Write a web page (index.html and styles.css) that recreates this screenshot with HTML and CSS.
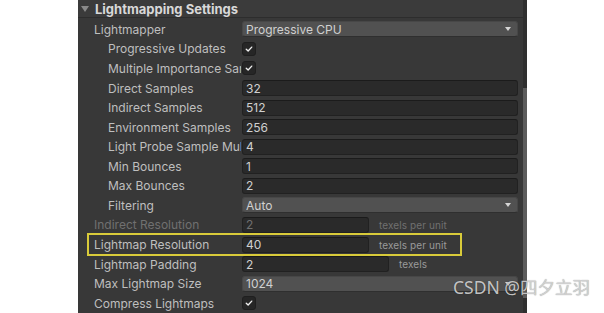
FILE: index.html
```html
<!DOCTYPE html>
<html lang="en">
<head>
    <meta charset="UTF-8">
    <meta name="viewport" content="width=device-width, initial-scale=1.0">
    <title>Lightmapping Settings</title>
    <link rel="stylesheet" href="styles.css">
</head>
<body>
    <div class="panel">
        <div class="content">
            <div class="header">
                <i class="foldout"></i>
                <span>Lightmapping Settings</span>
            </div>
            <div class="rows">
                <div class="row">
                    <span class="label">Lightmapper</span>
                    <div class="popup">Progressive CPU<i class="arrow"></i></div>
                </div>
                <div class="row sub">
                    <span class="label">Progressive Updates</span>
                    <div class="toggle"><svg viewBox="0 0 14 14"><path d="M3.8 7.2 L6 9.3 L10.2 4.8" /></svg></div>
                </div>
                <div class="row sub">
                    <span class="label">Multiple Importance Sampling</span>
                    <div class="toggle"><svg viewBox="0 0 14 14"><path d="M3.8 7.2 L6 9.3 L10.2 4.8" /></svg></div>
                </div>
                <div class="row sub">
                    <span class="label">Direct Samples</span>
                    <div class="input">32</div>
                </div>
                <div class="row sub">
                    <span class="label">Indirect Samples</span>
                    <div class="input">512</div>
                </div>
                <div class="row sub">
                    <span class="label">Environment Samples</span>
                    <div class="input">256</div>
                </div>
                <div class="row sub">
                    <span class="label">Light Probe Sample Multiplier</span>
                    <div class="input">4</div>
                </div>
                <div class="row sub">
                    <span class="label">Min Bounces</span>
                    <div class="input">1</div>
                </div>
                <div class="row sub">
                    <span class="label">Max Bounces</span>
                    <div class="input">2</div>
                </div>
                <div class="row sub">
                    <span class="label">Filtering</span>
                    <div class="popup">Auto<i class="arrow"></i></div>
                </div>
                <div class="row disabled">
                    <span class="label">Indirect Resolution</span>
                    <div class="with-suffix">
                        <div class="input short">2</div>
                        <span class="suffix">texels per unit</span>
                    </div>
                </div>
                <div class="row marked">
                    <span class="label">Lightmap Resolution</span>
                    <div class="with-suffix">
                        <div class="input short">40</div>
                        <span class="suffix">texels per unit</span>
                    </div>
                    <div class="highlight"></div>
                </div>
                <div class="row">
                    <span class="label">Lightmap Padding</span>
                    <div class="with-suffix">
                        <div class="input medium">2</div>
                        <span class="suffix">texels</span>
                    </div>
                </div>
                <div class="row">
                    <span class="label">Max Lightmap Size</span>
                    <div class="popup">1024<i class="arrow"></i></div>
                </div>
                <div class="row">
                    <span class="label">Compress Lightmaps</span>
                    <div class="toggle"><svg viewBox="0 0 14 14"><path d="M3.8 7.2 L6 9.3 L10.2 4.8" /></svg></div>
                </div>
            </div>
        </div>
        <div class="scrollbar"><div class="thumb"></div></div>
    </div>
    <div class="watermark">CSDN @四夕立羽</div>
</body>
</html>
```

FILE: styles.css
```css
body {
    margin: 0;
    padding: 0;
    background: #ffffff;
    font-family: 'Inter', 'Noto Sans', sans-serif;
    overflow: hidden;
}
.panel {
    margin-left: 78px;
    width: 449px;
    height: 313px;
    background-color: #383838;
    display: flex;
    overflow: hidden;
}
.content {
    flex: 1;
    display: flex;
    flex-direction: column;
}
.header {
    height: 18px;
    border-bottom: 1px solid #2d2d2d;
    display: flex;
    align-items: center;
    padding-left: 3px;
    gap: 6px;
    color: #d8d8d8;
    font-size: 13px;
    font-weight: 700;
    background-color: #3b3b3b;
}
.foldout {
    width: 0;
    height: 0;
    border-left: 4px solid transparent;
    border-right: 4px solid transparent;
    border-top: 6px solid #8a8a8a;
    margin-top: 1px;
}
.rows {
    padding-top: 1.2px;
    padding-left: 16px;
    padding-right: 5px;
}
.row {
    position: relative;
    height: 19.57px;
    display: flex;
    align-items: center;
}
.label {
    width: 147px;
    margin-right: 1px;
    flex-shrink: 0;
    font-size: 12px;
    color: #bfbfbf;
    white-space: nowrap;
    overflow: hidden;
    text-overflow: clip;
}
.row.sub .label {
    padding-left: 14px;
    width: 133px;
}
.row.disabled .label,
.row.disabled .input,
.row.disabled .suffix {
    color: #707070;
}
.input, .popup {
    width: 276px;
    height: 16px;
    box-sizing: border-box;
    border-radius: 3px;
    font-size: 12px;
    display: flex;
    align-items: center;
    padding-left: 3px;
    color: #d0d0d0;
}
.input {
    background-color: #2a2a2a;
    border: 1px solid #212121;
    border-top-color: #1b1b1b;
}
.input.short {
    width: 127px;
}
.input.medium {
    width: 147px;
}
.popup {
    background-color: #515151;
    border: 1px solid #474747;
    border-bottom-color: #2f2f2f;
    position: relative;
}
.arrow {
    position: absolute;
    right: 6px;
    top: 5px;
    width: 0;
    height: 0;
    border-left: 3.5px solid transparent;
    border-right: 3.5px solid transparent;
    border-top: 4px solid #d6d6d6;
}
.toggle {
    width: 14px;
    height: 14px;
    box-sizing: border-box;
    background-color: #262626;
    border: 1px solid #1f1f1f;
    border-radius: 3px;
}
.toggle svg {
    display: block;
    width: 12px;
    height: 12px;
}
.toggle path {
    fill: none;
    stroke: #efefef;
    stroke-width: 1.6;
    stroke-linecap: round;
    stroke-linejoin: round;
}
.with-suffix {
    display: flex;
    align-items: center;
    gap: 10px;
}
.suffix {
    font-size: 10px;
    color: #9a9a9a;
    letter-spacing: 0.1px;
}
.highlight {
    position: absolute;
    left: -7px;
    top: -1.5px;
    width: 375px;
    height: 23px;
    box-sizing: border-box;
    border: 2px solid #d9cb3a;
}
.scrollbar {
    width: 4px;
    background-color: #2f2f2f;
    display: flex;
    flex-direction: column;
}
.thumb {
    margin-top: 88px;
    height: 210px;
    background-color: #5c5c5c;
}
.watermark {
    position: absolute;
    left: 453px;
    top: 274px;
    font-family: 'Noto Sans', 'Noto Sans CJK SC', sans-serif;
    font-size: 17.5px;
    color: rgba(215, 215, 215, 0.9);
    text-shadow: 0 0 1px rgba(0, 0, 0, 0.45);
    white-space: nowrap;
}
```
